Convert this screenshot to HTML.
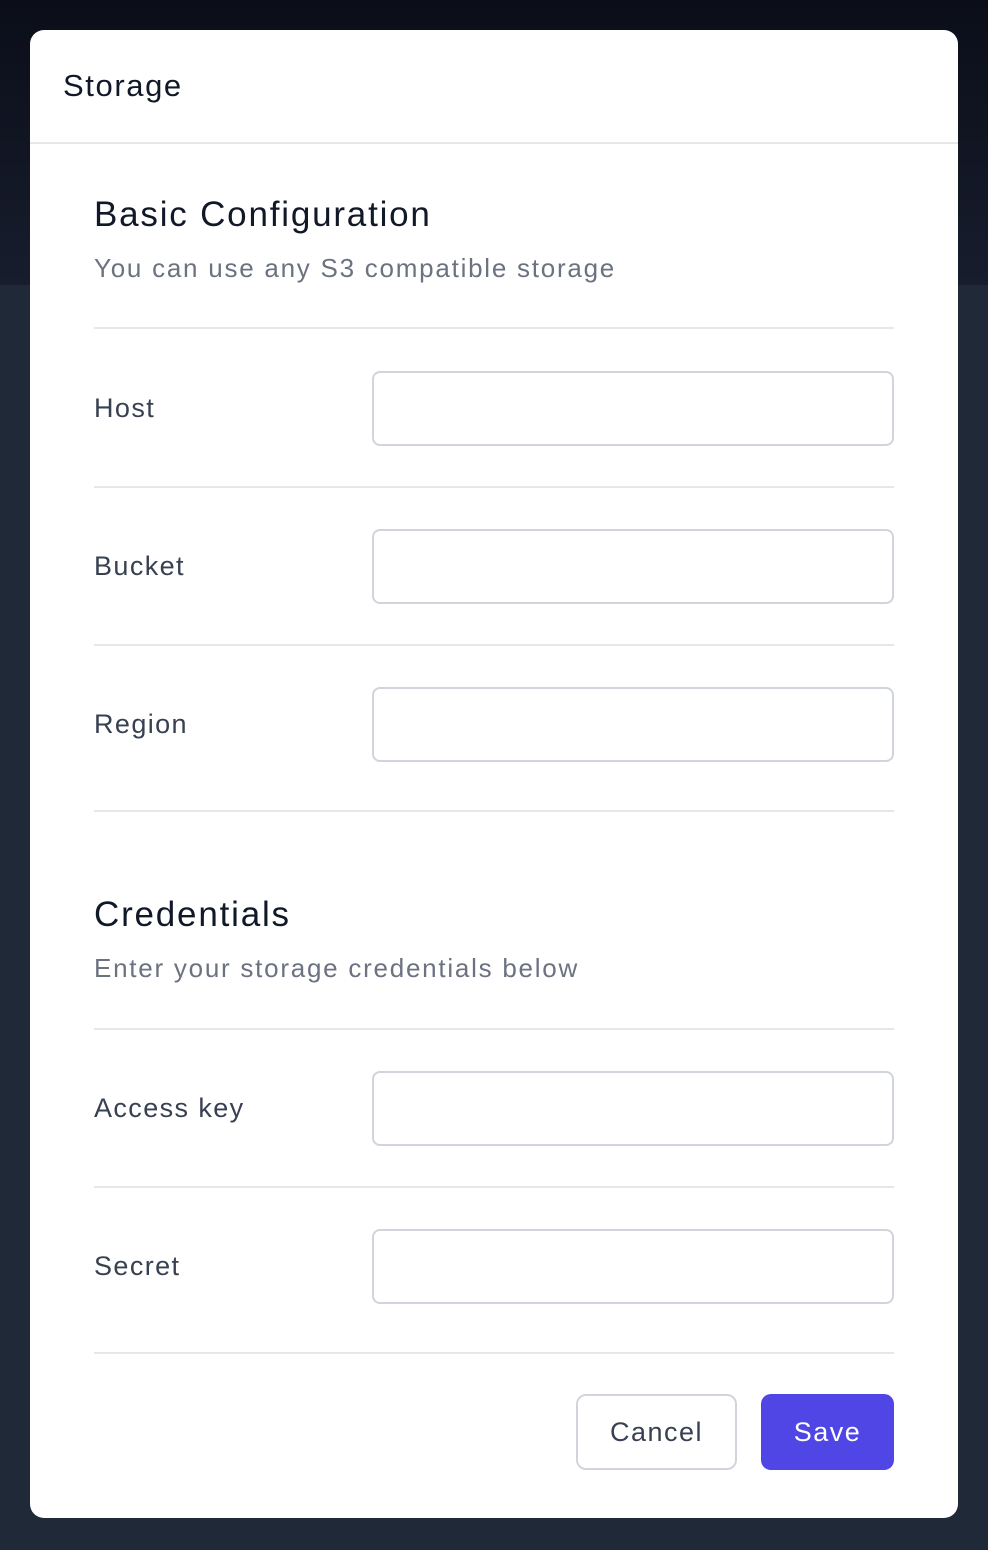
<!DOCTYPE html>
<html><head><style>
*{margin:0;padding:0;box-sizing:border-box}
body{width:988px;height:1550px;position:relative;background:#1f2937;font-family:"Liberation Sans",sans-serif;overflow:hidden}
.top{position:absolute;left:0;top:0;width:988px;height:285px;background:linear-gradient(#0b0e19,#171d2d)}
.modal{position:absolute;left:30px;top:30px;width:928px;height:1488px;background:#fff;border-radius:14px}
.a{position:absolute;white-space:nowrap}
.hr{position:absolute;left:64px;width:800px;height:2px;background:#e5e7eb}
.in{position:absolute;left:342px;width:522px;height:75px;border:2px solid #d1d5db;border-radius:8px}
.lab{position:absolute;left:64px;font-size:27px;color:#374151;letter-spacing:1.4px}
h2{position:absolute;left:64px;font-size:35px;font-weight:normal;color:#111827;letter-spacing:1.8px}
.sub{position:absolute;left:64px;font-size:26px;color:#6b7280;letter-spacing:1.75px}
</style></head><body>
<div class="top"></div>
<div class="modal">
<div class="a" style="left:33px;top:38px;font-size:31px;color:#111827;letter-spacing:1.6px">Storage</div>
<div style="position:absolute;left:0;top:112px;width:928px;height:2px;background:#e5e7eb"></div>
<h2 style="top:165px">Basic Configuration</h2>
<div class="sub" style="top:223px">You can use any S3 compatible storage</div>
<div class="hr" style="top:297px"></div>
<div class="lab" style="top:363px">Host</div><div class="in" style="top:341px"></div>
<div class="hr" style="top:456px"></div>
<div class="lab" style="top:521px">Bucket</div><div class="in" style="top:499px"></div>
<div class="hr" style="top:614px"></div>
<div class="lab" style="top:679px">Region</div><div class="in" style="top:657px"></div>
<div class="hr" style="top:780px"></div>
<h2 style="top:865px">Credentials</h2>
<div class="sub" style="top:923px">Enter your storage credentials below</div>
<div class="hr" style="top:998px"></div>
<div class="lab" style="top:1063px">Access key</div><div class="in" style="top:1041px"></div>
<div class="hr" style="top:1156px"></div>
<div class="lab" style="top:1221px">Secret</div><div class="in" style="top:1199px"></div>
<div class="hr" style="top:1322px"></div>
<div style="position:absolute;left:546px;top:1364px;width:161px;height:76px;border:2px solid #d1d5db;border-radius:10px;font-size:27px;color:#374151;text-align:center;line-height:72px;letter-spacing:1.5px">Cancel</div>
<div style="position:absolute;left:731px;top:1364px;width:133px;height:76px;background:#4f46e5;border-radius:10px;font-size:27px;color:#fff;text-align:center;line-height:76px;letter-spacing:1.5px">Save</div>
</div>
</body></html>
